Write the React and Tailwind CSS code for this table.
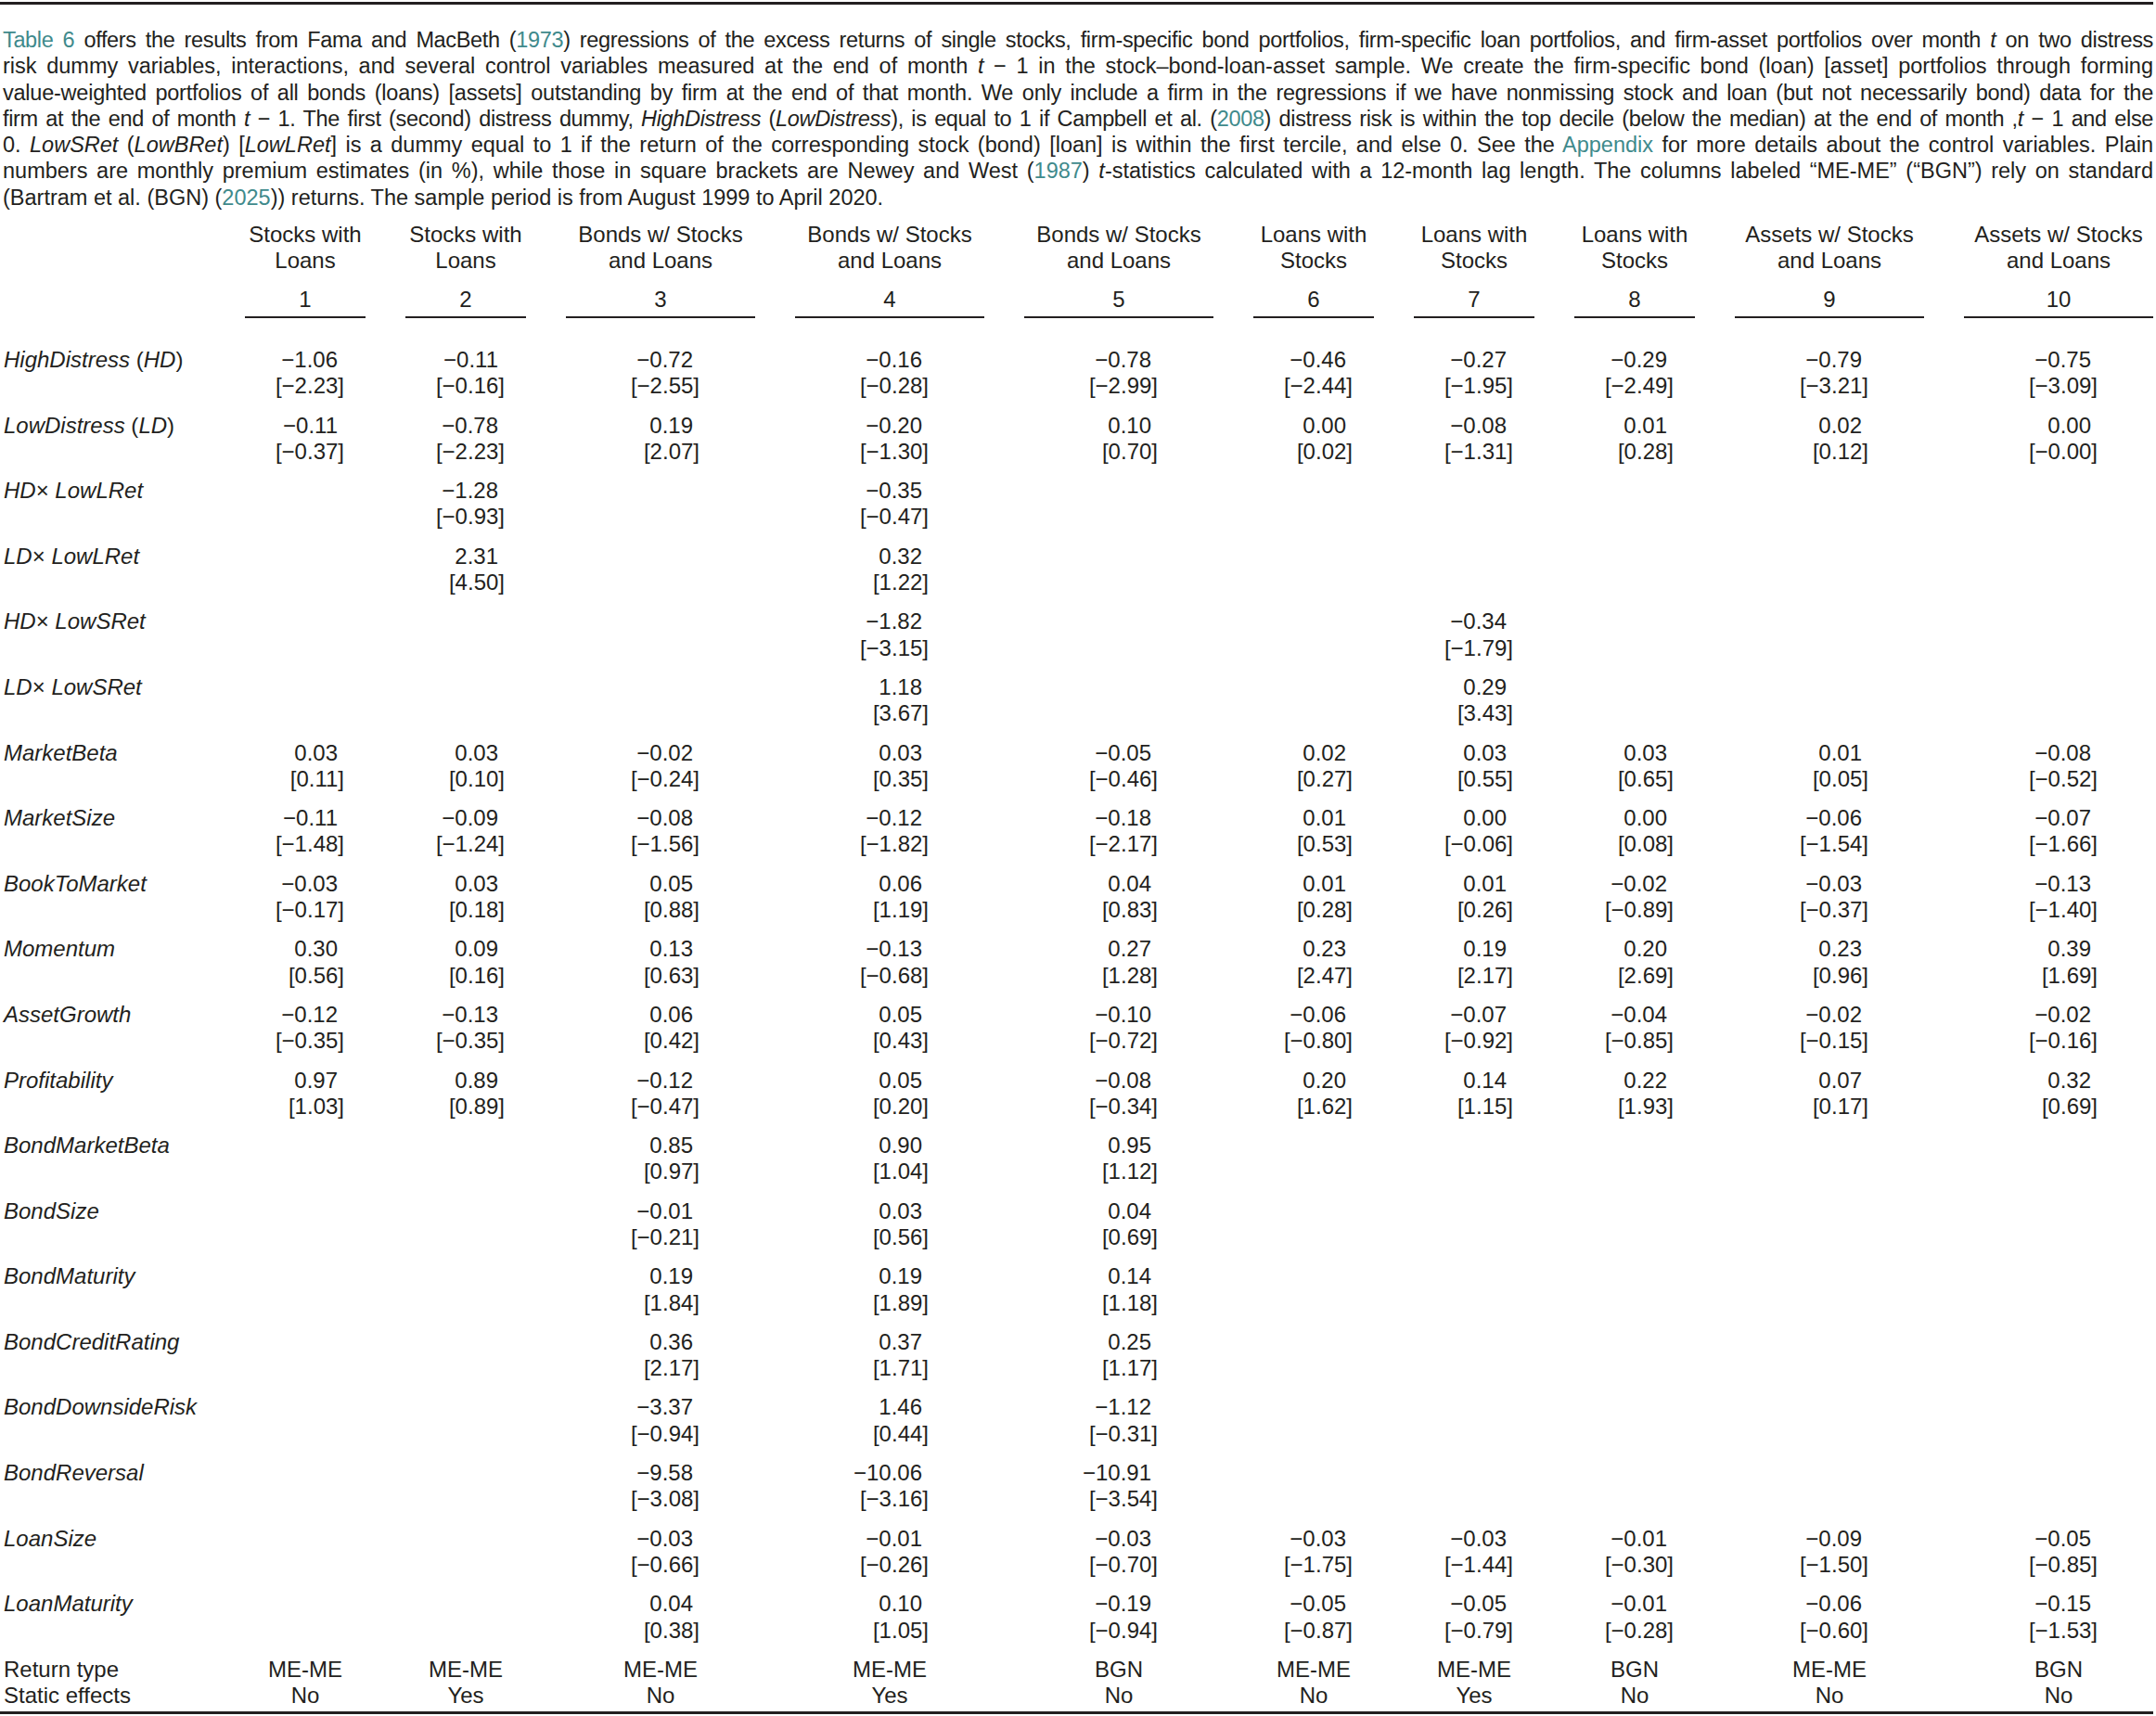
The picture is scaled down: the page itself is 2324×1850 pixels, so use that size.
const LINK = 'text-[#3f8a8c]'

const heads = [
  ['Stocks with', 'Loans'],
  ['Stocks with', 'Loans'],
  ['Bonds w/ Stocks', 'and Loans'],
  ['Bonds w/ Stocks', 'and Loans'],
  ['Bonds w/ Stocks', 'and Loans'],
  ['Loans with', 'Stocks'],
  ['Loans with', 'Stocks'],
  ['Loans with', 'Stocks'],
  ['Assets w/ Stocks', 'and Loans'],
  ['Assets w/ Stocks', 'and Loans'],
]

// each cell: [coef, tstat] or null
const rows = [
  {
    label: <><i>HighDistress</i> (<i>HD</i>)</>,
    cells: [['-1.06', '-2.23'], ['-0.11', '-0.16'], ['-0.72', '-2.55'], ['-0.16', '-0.28'], ['-0.78', '-2.99'], ['-0.46', '-2.44'], ['-0.27', '-1.95'], ['-0.29', '-2.49'], ['-0.79', '-3.21'], ['-0.75', '-3.09']],
  },
  {
    label: <><i>LowDistress</i> (<i>LD</i>)</>,
    cells: [['-0.11', '-0.37'], ['-0.78', '-2.23'], ['0.19', '2.07'], ['-0.20', '-1.30'], ['0.10', '0.70'], ['0.00', '0.02'], ['-0.08', '-1.31'], ['0.01', '0.28'], ['0.02', '0.12'], ['0.00', '-0.00']],
  },
  {
    label: <><i>HD</i>× <i>LowLRet</i></>,
    cells: [null, ['-1.28', '-0.93'], null, ['-0.35', '-0.47'], null, null, null, null, null, null],
  },
  {
    label: <><i>LD</i>× <i>LowLRet</i></>,
    cells: [null, ['2.31', '4.50'], null, ['0.32', '1.22'], null, null, null, null, null, null],
  },
  {
    label: <><i>HD</i>× <i>LowSRet</i></>,
    cells: [null, null, null, ['-1.82', '-3.15'], null, null, ['-0.34', '-1.79'], null, null, null],
  },
  {
    label: <><i>LD</i>× <i>LowSRet</i></>,
    cells: [null, null, null, ['1.18', '3.67'], null, null, ['0.29', '3.43'], null, null, null],
  },
  {
    label: <i>MarketBeta</i>,
    cells: [['0.03', '0.11'], ['0.03', '0.10'], ['-0.02', '-0.24'], ['0.03', '0.35'], ['-0.05', '-0.46'], ['0.02', '0.27'], ['0.03', '0.55'], ['0.03', '0.65'], ['0.01', '0.05'], ['-0.08', '-0.52']],
  },
  {
    label: <i>MarketSize</i>,
    cells: [['-0.11', '-1.48'], ['-0.09', '-1.24'], ['-0.08', '-1.56'], ['-0.12', '-1.82'], ['-0.18', '-2.17'], ['0.01', '0.53'], ['0.00', '-0.06'], ['0.00', '0.08'], ['-0.06', '-1.54'], ['-0.07', '-1.66']],
  },
  {
    label: <i>BookToMarket</i>,
    cells: [['-0.03', '-0.17'], ['0.03', '0.18'], ['0.05', '0.88'], ['0.06', '1.19'], ['0.04', '0.83'], ['0.01', '0.28'], ['0.01', '0.26'], ['-0.02', '-0.89'], ['-0.03', '-0.37'], ['-0.13', '-1.40']],
  },
  {
    label: <i>Momentum</i>,
    cells: [['0.30', '0.56'], ['0.09', '0.16'], ['0.13', '0.63'], ['-0.13', '-0.68'], ['0.27', '1.28'], ['0.23', '2.47'], ['0.19', '2.17'], ['0.20', '2.69'], ['0.23', '0.96'], ['0.39', '1.69']],
  },
  {
    label: <i>AssetGrowth</i>,
    cells: [['-0.12', '-0.35'], ['-0.13', '-0.35'], ['0.06', '0.42'], ['0.05', '0.43'], ['-0.10', '-0.72'], ['-0.06', '-0.80'], ['-0.07', '-0.92'], ['-0.04', '-0.85'], ['-0.02', '-0.15'], ['-0.02', '-0.16']],
  },
  {
    label: <i>Profitability</i>,
    cells: [['0.97', '1.03'], ['0.89', '0.89'], ['-0.12', '-0.47'], ['0.05', '0.20'], ['-0.08', '-0.34'], ['0.20', '1.62'], ['0.14', '1.15'], ['0.22', '1.93'], ['0.07', '0.17'], ['0.32', '0.69']],
  },
  {
    label: <i>BondMarketBeta</i>,
    cells: [null, null, ['0.85', '0.97'], ['0.90', '1.04'], ['0.95', '1.12'], null, null, null, null, null],
  },
  {
    label: <i>BondSize</i>,
    cells: [null, null, ['-0.01', '-0.21'], ['0.03', '0.56'], ['0.04', '0.69'], null, null, null, null, null],
  },
  {
    label: <i>BondMaturity</i>,
    cells: [null, null, ['0.19', '1.84'], ['0.19', '1.89'], ['0.14', '1.18'], null, null, null, null, null],
  },
  {
    label: <i>BondCreditRating</i>,
    cells: [null, null, ['0.36', '2.17'], ['0.37', '1.71'], ['0.25', '1.17'], null, null, null, null, null],
  },
  {
    label: <i>BondDownsideRisk</i>,
    cells: [null, null, ['-3.37', '-0.94'], ['1.46', '0.44'], ['-1.12', '-0.31'], null, null, null, null, null],
  },
  {
    label: <i>BondReversal</i>,
    cells: [null, null, ['-9.58', '-3.08'], ['-10.06', '-3.16'], ['-10.91', '-3.54'], null, null, null, null, null],
  },
  {
    label: <i>LoanSize</i>,
    cells: [null, null, ['-0.03', '-0.66'], ['-0.01', '-0.26'], ['-0.03', '-0.70'], ['-0.03', '-1.75'], ['-0.03', '-1.44'], ['-0.01', '-0.30'], ['-0.09', '-1.50'], ['-0.05', '-0.85']],
  },
  {
    label: <i>LoanMaturity</i>,
    cells: [null, null, ['0.04', '0.38'], ['0.10', '1.05'], ['-0.19', '-0.94'], ['-0.05', '-0.87'], ['-0.05', '-0.79'], ['-0.01', '-0.28'], ['-0.06', '-0.60'], ['-0.15', '-1.53']],
  },
]

const returnType = ['ME-ME', 'ME-ME', 'ME-ME', 'ME-ME', 'BGN', 'ME-ME', 'ME-ME', 'BGN', 'ME-ME', 'BGN']
const staticFx = ['No', 'Yes', 'No', 'Yes', 'No', 'No', 'Yes', 'No', 'No', 'No']

const minus = (s) => s.replace('-', '\u2212')

const GRID = 'grid grid-cols-[218px_130px_130px_204px_204px_204px_130px_130px_130px_204px_204px] gap-x-[43px]'

function NumCell({ cell }) {
  if (!cell) return <div />
  return (
    <div className="flex justify-center">
      <div className="w-[84px] flex flex-col items-end whitespace-nowrap">
        <span className="pr-[7px]">{minus(cell[0])}</span>
        <span>[{minus(cell[1])}]</span>
      </div>
    </div>
  )
}

function Paragraph() {
  const line = 'text-justify [text-align-last:justify] whitespace-nowrap'
  return (
    <div className="mt-[24px] px-[3px] text-[23.5px] leading-[28.3px]">
      <div className={line + ' tracking-[-0.015em]'}>
        <span className={LINK}>Table 6</span> offers the results from Fama and MacBeth (<span className={LINK}>1973</span>) regressions of the excess returns of single stocks, firm-specific bond portfolios, firm-specific loan portfolios, and firm-asset portfolios over month <i>t</i> on two distress
      </div>
      <div className={line}>
        risk dummy variables, interactions, and several control variables measured at the end of month <i>t</i> − 1 in the stock–bond-loan-asset sample. We create the firm-specific bond (loan) [asset] portfolios through forming
      </div>
      <div className={line + ' tracking-[-0.01em]'}>
        value-weighted portfolios of all bonds (loans) [assets] outstanding by firm at the end of that month. We only include a firm in the regressions if we have nonmissing stock and loan (but not necessarily bond) data for the
      </div>
      <div className={line + ' tracking-[-0.015em]'}>
        firm at the end of month <i>t</i> − 1. The first (second) distress dummy, <i>HighDistress</i> (<i>LowDistress</i>), is equal to 1 if Campbell et al. (<span className={LINK}>2008</span>) distress risk is within the top decile (below the median) at the end of month ,<i>t</i> − 1 and else
      </div>
      <div className={line}>
        0. <i>LowSRet</i> (<i>LowBRet</i>) [<i>LowLRet</i>] is a dummy equal to 1 if the return of the corresponding stock (bond) [loan] is within the first tercile, and else 0. See the <span className={LINK}>Appendix</span> for more details about the control variables. Plain
      </div>
      <div className={line}>
        numbers are monthly premium estimates (in %), while those in square brackets are Newey and West (<span className={LINK}>1987</span>) <i>t</i>-statistics calculated with a 12-month lag length. The columns labeled “ME-ME” (“BGN”) rely on standard
      </div>
      <div className="whitespace-nowrap">
        (Bartram et al. (BGN) (<span className={LINK}>2025</span>)) returns. The sample period is from August 1999 to April 2020.
      </div>
    </div>
  )
}

export default function App() {
  return (
    <div className="w-[2324px] bg-white text-[#231f20] font-['Liberation_Sans',Arial,sans-serif]">
      <div className="pt-[2px] pr-[3px]">
        <div className="h-[3px] bg-[#231f20]" />
      </div>

      <Paragraph />

      <div className="px-[3px] text-[24px] leading-[28.3px]">
        <div className={GRID + ' mt-[12px]'}>
          <div />
          {heads.map((h, i) => (
            <div key={i} className="flex flex-col items-center whitespace-nowrap">
              <span>{h[0]}</span>
              <span>{h[1]}</span>
              <span className="mt-[13px]">{i + 1}</span>
              <div className="mt-[4px] h-[2px] w-full bg-[#231f20]" />
            </div>
          ))}
        </div>

        <div className="mt-[31px] flex flex-col gap-[14px]">
          {rows.map((r, ri) => (
            <div key={ri} className={GRID + ' h-[56.6px]'}>
              <div className="whitespace-nowrap pl-[1px]">{r.label}</div>
              {r.cells.map((c, ci) => (
                <NumCell key={ci} cell={c} />
              ))}
            </div>
          ))}
          <div className={GRID}>
            <div className="flex flex-col whitespace-nowrap pl-[1px]">
              <span>Return type</span>
              <span>Static effects</span>
            </div>
            {returnType.map((t, i) => (
              <div key={i} className="flex flex-col items-center">
                <span>{t}</span>
                <span>{staticFx[i]}</span>
              </div>
            ))}
          </div>
        </div>
      </div>

      <div className="pt-[2.5px] pr-[3px] pb-[2px]">
        <div className="h-[3px] bg-[#231f20]" />
      </div>
    </div>
  )
}
